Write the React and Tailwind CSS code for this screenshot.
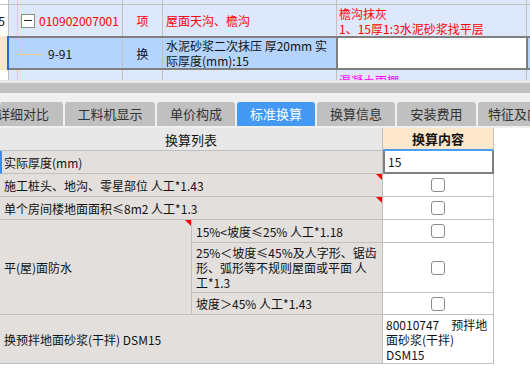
import React from 'react';

const Tri = () => (
  <div className="absolute top-0 right-0 w-0 h-0 border-t-[6px] border-t-[#ff0000] border-l-[6px] border-l-transparent" />
);

const Check = () => (
  <div className="w-[14px] h-[14px] border border-[#8c8c8c] rounded-[3px] bg-white" />
);

const TreeLine = ({ half }) => (
  <div className={`absolute left-[8px] top-0 w-px bg-[#f7c98f] ${half ? 'h-[17px]' : 'bottom-0'}`} />
);

const tabs = [
  { label: '详细对比', w: 'w-[63px] justify-end pr-[14px]' },
  { label: '工料机显示', w: 'w-[90px] justify-center' },
  { label: '单价构成', w: 'w-[78px] justify-center' },
  { label: '标准换算', w: 'w-[78px] justify-center', active: true },
  { label: '换算信息', w: 'w-[78px] justify-center' },
  { label: '安装费用', w: 'w-[79px] justify-center' },
  { label: '特征及内容', w: 'w-[70px] justify-start pl-[10px]' },
];

export default function App() {
  return (
    <div className="w-[530px] h-[371px] overflow-hidden bg-white text-[12px] leading-[15px] text-[#111] font-['Noto_Sans_CJK_SC',sans-serif]">
      {/* 上方清单表格 */}
      <div className="h-[80px] overflow-hidden bg-[#dde9fb]">
        {/* row 0 */}
        <div className="flex h-[5px] border-b border-[#c0c0c0]">
          <div className="w-[9px] shrink-0 bg-white border-r border-[#c0c0c0]" />
          <div className="relative w-[114px] shrink-0 border-r border-[#c0c0c0]"><TreeLine /></div>
          <div className="w-[40px] shrink-0 border-r border-[#c0c0c0]" />
          <div className="w-[174px] shrink-0 border-r border-[#c0c0c0]" />
          <div className="w-[190px] shrink-0 border-r border-[#c0c0c0]" />
        </div>
        {/* row 1 */}
        <div className="flex h-[31px]">
          <div className="w-[9px] shrink-0 bg-white border-r border-[#c0c0c0] overflow-hidden flex items-center justify-end pr-[3px]">5</div>
          <div className="relative w-[114px] shrink-0 border-r border-[#c0c0c0] flex items-center pl-[12px] gap-[4px]">
            <TreeLine />
            <div className="w-[14px] h-[14px] bg-white border border-[#8a8a8a] flex items-center justify-center">
              <div className="w-[8px] h-px bg-[#222]" />
            </div>
            <span className="text-[#ff0000] whitespace-nowrap">010902007001</span>
          </div>
          <div className="w-[40px] shrink-0 border-r border-[#c0c0c0] flex items-center justify-center text-[#ff0000]">项</div>
          <div className="w-[174px] shrink-0 border-r border-[#c0c0c0] flex items-center pl-[3px] text-[#ff0000]">屋面天沟、檐沟</div>
          <div className="w-[190px] shrink-0 border-r border-[#c0c0c0] pl-[2px] pt-[1px] text-[#ff0000] whitespace-nowrap">
            <div>檐沟抹灰</div>
            <div>1、15厚1:3水泥砂浆找平层</div>
          </div>
        </div>
        {/* row 2 selected */}
        <div className="flex h-[34px]">
          <div className="w-[7px] shrink-0 bg-[#fce6c8]" />
          <div className="w-[2px] shrink-0 bg-[#1a6cf0]" />
          <div className="flex flex-1 border-y-2 border-[#7f7f7f] bg-[#b5d4fd]">
            <div className="relative w-[114px] shrink-0 border-r border-[#c0c0c0] flex items-center pl-[39px]">
              <TreeLine half />
              <div className="absolute left-[8px] top-[16px] w-[26px] h-px bg-[#f7c98f]" />
              9-91
            </div>
            <div className="w-[40px] shrink-0 border-r border-[#c0c0c0] flex items-center justify-center">换</div>
            <div className="w-[173px] shrink-0 flex flex-col justify-center pl-[3px] whitespace-nowrap overflow-hidden">
              <div>水泥砂浆二次抹压 厚20mm 实</div>
              <div>际厚度(mm):15</div>
            </div>
            <div className="w-[192px] shrink-0 bg-white border-x-2 border-[#7f7f7f]" />
          </div>
        </div>
        {/* row 3 partial */}
        <div className="flex h-[10px] overflow-hidden">
          <div className="w-[9px] shrink-0 bg-white border-r border-[#c0c0c0]" />
          <div className="relative w-[114px] shrink-0 border-r border-[#c0c0c0]"><TreeLine /></div>
          <div className="w-[40px] shrink-0 border-r border-[#c0c0c0]" />
          <div className="w-[174px] shrink-0 border-r border-[#c0c0c0]" />
          <div className="w-[190px] shrink-0 border-r border-[#c0c0c0] pl-[2px] pt-[3px] text-[#ff00ff] whitespace-nowrap">混凝土雨棚</div>
        </div>
      </div>

      {/* 分隔条 */}
      <div className="h-[3px] bg-[#e8e8e8]" />
      <div className="h-[10px] bg-[#c0c0c0]" />
      <div className="h-[9px] bg-[#f0f0f0]" />

      {/* 页签 */}
      <div className="flex h-[24px] gap-[2px] bg-[#f0f0f0] overflow-hidden text-[13px] leading-[24px]">
        {tabs.map((t) => (
          <div
            key={t.label}
            className={`${t.w} shrink-0 flex whitespace-nowrap overflow-hidden rounded-t-[3px] ${
              t.active ? 'bg-[#4499f5] text-white' : 'bg-[#c0c0c0] text-[#333]'
            }`}
          >
            {t.label}
          </div>
        ))}
      </div>
      <div className="h-[2px] bg-[#f0f0f0]" />

      {/* 换算表 */}
      <div className="w-[494px]">
        {/* header */}
        <div className="flex h-[23px] text-[13px]">
          <div className="w-[383px] shrink-0 bg-[#e8e8e8] border-r border-b border-[#c0c0c0] flex items-center justify-center">换算列表</div>
          <div className="w-[111px] shrink-0 bg-[#fde7cb] border-r border-[#c0c0c0] border-b-2 border-b-[#4a9df5] flex items-center justify-center font-bold">换算内容</div>
        </div>
        {/* 实际厚度 */}
        <div className="flex h-[23px]">
          <div className="w-[383px] shrink-0 bg-[#e2dfdd] border-l-2 border-l-[#3b8cf0] border-r border-b border-[#c0c0c0] flex items-center pl-[2px]">实际厚度(mm)</div>
          <div className="w-[111px] shrink-0 bg-white border-2 border-t-0 border-[#7f7f7f] flex items-center pl-[3px]">15</div>
        </div>
        {/* 施工桩头 */}
        <div className="flex h-[23px]">
          <div className="relative w-[383px] shrink-0 bg-[#e2dfdd] border-r border-b border-[#c0c0c0] flex items-center pl-[4px]">
            施工桩头、地沟、零星部位 人工*1.43
            <Tri />
          </div>
          <div className="w-[111px] shrink-0 bg-white border-r border-b border-[#c0c0c0] flex items-center justify-center"><Check /></div>
        </div>
        {/* 单个房间 */}
        <div className="flex h-[23px]">
          <div className="relative w-[383px] shrink-0 bg-[#e2dfdd] border-r border-b border-[#c0c0c0] flex items-center pl-[4px]">
            单个房间楼地面面积≤8m2 人工*1.3
            <Tri />
          </div>
          <div className="w-[111px] shrink-0 bg-white border-r border-b border-[#c0c0c0] flex items-center justify-center"><Check /></div>
        </div>
        {/* 平(屋)面防水 */}
        <div className="flex">
          <div className="w-[383px] shrink-0 flex bg-[#e2dfdd] border-r border-[#c0c0c0]">
            <div className="relative w-[192px] shrink-0 border-r border-b border-[#c0c0c0] flex items-center pl-[4px]">
              平(屋)面防水
              <Tri />
            </div>
            <div className="flex-1 flex flex-col">
              <div className="h-[23px] border-b border-[#c0c0c0] flex items-center pl-[4px] whitespace-nowrap">15%&lt;坡度≤25% 人工*1.18</div>
              <div className="h-[50px] border-b border-[#c0c0c0] flex flex-col justify-center pl-[4px] whitespace-nowrap leading-[15px]">
                <div>25%＜坡度≤45%及人字形、锯齿</div>
                <div>形、弧形等不规则屋面或平面 人</div>
                <div>工*1.3</div>
              </div>
              <div className="h-[22px] border-b border-[#c0c0c0] flex items-center pl-[4px] whitespace-nowrap">坡度＞45% 人工*1.43</div>
            </div>
          </div>
          <div className="w-[111px] shrink-0 flex flex-col bg-white border-r border-[#c0c0c0]">
            <div className="h-[23px] border-b border-[#c0c0c0] flex items-center justify-center"><Check /></div>
            <div className="h-[50px] border-b border-[#c0c0c0] flex items-center justify-center"><Check /></div>
            <div className="h-[22px] border-b border-[#c0c0c0] flex items-center justify-center"><Check /></div>
          </div>
        </div>
        {/* 换预拌砂浆 */}
        <div className="flex h-[49px]">
          <div className="w-[383px] shrink-0 bg-[#e2dfdd] border-r border-b border-[#c0c0c0] flex items-center pl-[4px]">换预拌地面砂浆(干拌) DSM15</div>
          <div className="w-[111px] shrink-0 bg-white border-r border-b border-[#c0c0c0] flex flex-col justify-center pl-[3px] leading-[15px] whitespace-nowrap">
            <div>80010747　预拌地</div>
            <div>面砂浆(干拌)</div>
            <div>DSM15</div>
          </div>
        </div>
      </div>
    </div>
  );
}
